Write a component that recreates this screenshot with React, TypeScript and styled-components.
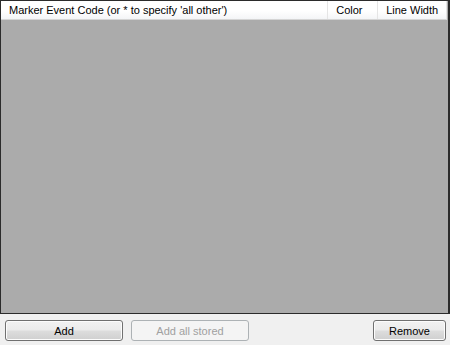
import React from "react";
import styled, { createGlobalStyle } from "styled-components";

const Global = createGlobalStyle`
  html, body {
    margin: 0;
    padding: 0;
    background: #f0f0f0;
  }
  body {
    font-family: "Liberation Sans", Arial, sans-serif;
    font-size: 11px;
  }
`;

const Window = styled.div`
  width: 450px;
  height: 345px;
  display: flex;
  flex-direction: column;
  background: #f0f0f0;
`;

const ListBox = styled.div`
  height: 314px;
  box-sizing: border-box;
  border: 1px solid #2b2b2b;
  border-right-width: 2px;
  background: #ababab;
  display: flex;
  flex-direction: column;
`;

const Header = styled.div`
  display: flex;
  height: 19px;
  width: 446px;
  box-sizing: border-box;
  background: linear-gradient(#ffffff, #ffffff 55%, #f4f5f7);
  border-bottom: 1px solid #d5d5d5;
  border-right: 1px solid #e5e5e5;
`;

const Col = styled.div<{ w: number }>`
  width: ${({ w }) => w}px;
  box-sizing: border-box;
  padding-left: 8px;
  line-height: 18px;
  color: #000;
  white-space: nowrap;
  border-right: 1px solid #e5e5e5;
  &:last-child {
    border-right: none;
  }
`;

const ButtonRow = styled.div`
  display: flex;
  align-items: center;
  padding: 6px 4px 0 5px;
`;

const Button = styled.button<{ w: number; gap?: number }>`
  width: ${({ w }) => w}px;
  height: 21px;
  margin-right: ${({ gap }) => gap ?? 0}px;
  box-sizing: border-box;
  padding: 0;
  font-family: inherit;
  font-size: 11px;
  color: #000;
  border: 1px solid #707070;
  border-radius: 3px;
  background: linear-gradient(#f2f2f2, #ebebeb 48%, #dddddd 52%, #cfcfcf);
  box-shadow: inset 0 0 0 1px #fcfcfc;
  &:disabled {
    color: #a0a0a0;
    border-color: #adb2b5;
    background: #f4f4f4;
    box-shadow: none;
  }
`;

const Spacer = styled.div`
  flex: 1;
`;

export default function App() {
  return (
    <Window>
      <Global />
      <ListBox>
        <Header>
          <Col w={328}>Marker Event Code (or * to specify 'all other')</Col>
          <Col w={50}>Color</Col>
          <Col w={68}>Line Width</Col>
        </Header>
      </ListBox>
      <ButtonRow>
        <Button w={118} gap={8}>Add</Button>
        <Button w={118} disabled>
          Add all stored
        </Button>
        <Spacer />
        <Button w={73}>Remove</Button>
      </ButtonRow>
    </Window>
  );
}
